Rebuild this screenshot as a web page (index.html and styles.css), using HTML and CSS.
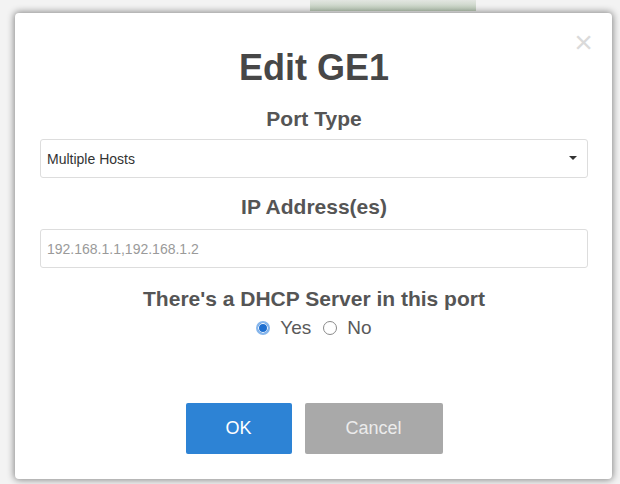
FILE: index.html
```html
<!DOCTYPE html>
<html>
<head>
    <meta charset="UTF-8">
    <title>Edit GE1</title>
    <link rel="stylesheet" href="styles.css">
</head>
<body>
    <div class="bg-tab"></div>
    <div class="modal">
        <span class="close">&times;</span>
        <h1 class="title">Edit GE1</h1>

        <label class="label" for="portType">Port Type</label>
        <div class="select-wrap">
            <select id="portType" class="field">
                <option>Multiple Hosts</option>
            </select>
            <span class="caret"></span>
        </div>

        <label class="label" for="ipAddr">IP Address(es)</label>
        <input id="ipAddr" class="field" type="text" placeholder="192.168.1.1,192.168.1.2">

        <div class="label dhcp">There's a DHCP Server in this port</div>
        <div class="radios">
            <span class="radio checked"></span><span class="radio-text">Yes</span>
            <span class="radio"></span><span class="radio-text">No</span>
        </div>

        <div class="btns">
            <div class="btn btn-ok">OK</div>
            <div class="btn btn-cancel">Cancel</div>
        </div>
    </div>
</body>
</html>
```

FILE: styles.css
```css
*{
    margin: 0;
    padding: 0;
    box-sizing: border-box;
}
body{
    position: relative;
    background: #f3f3f3;
    font-family: "Liberation Sans", Arial, sans-serif;
    padding: 13px 8px 5px 15px;
    height: 484px;
    overflow: hidden;
}
.bg-tab{
    position: absolute;
    top: 0;
    left: 310px;
    width: 166px;
    height: 11px;
    background: linear-gradient(#e2e6e1, #bccbb8);
}
.modal{
    position: relative;
    width: 597px;
    height: 466px;
    background: #fff;
    border-radius: 4px;
    box-shadow: 0 0 7px 1px rgba(0,0,0,.45);
    padding: 35px 24px 0 25px;
    display: flex;
    flex-direction: column;
    align-items: stretch;
    text-align: center;
}
.close{
    position: absolute;
    top: 16px;
    right: 19px;
    font-size: 32px;
    line-height: 26px;
    font-weight: 300;
    color: #dadada;
}
.title{
    font-size: 36px;
    line-height: 40px;
    font-weight: bold;
    color: #474747;
}
.label{
    display: block;
    font-size: 21px;
    line-height: 25px;
    font-weight: bold;
    color: #555;
    margin: 18px 0 8px;
}
.select-wrap{
    position: relative;
}
.field{
    display: block;
    width: 100%;
    height: 39px;
    border: 1px solid #ddd;
    border-radius: 3px;
    background: #fff;
    padding: 0 6px;
    font: 14px "Liberation Sans", Arial, sans-serif;
    color: #333;
    appearance: none;
    -webkit-appearance: none;
    outline: none;
}
.field::placeholder{
    color: #9a9a9a;
}
.caret{
    position: absolute;
    right: 11px;
    top: 17px;
    border-left: 4px solid transparent;
    border-right: 4px solid transparent;
    border-top: 4px solid #333;
}
.select-wrap + .label{
    margin-top: 16px;
    margin-bottom: 10px;
}
.dhcp{
    margin: 18px 0 5px;
}
.radios{
    display: flex;
    justify-content: center;
    align-items: center;
    height: 24px;
    font-size: 19px;
    color: #5a5a5a;
}
.radio{
    width: 14px;
    height: 14px;
    border-radius: 50%;
    border: 1px solid #8a8a8a;
    margin-right: 10px;
}
.radio.checked{
    border: 2px solid #86b6ec;
    background: #1e6fd0;
    box-shadow: inset 0 0 0 1px #fff;
}
.radio-text{
    margin-right: 12px;
}
.radio-text:last-child{
    margin-right: 0;
}
.btns{
    display: flex;
    justify-content: center;
    gap: 13px;
    margin-top: 63px;
}
.btn{
    height: 51px;
    border-radius: 2px;
    font-size: 18px;
    line-height: 51px;
    color: #fff;
}
.btn-ok{
    width: 106px;
    background: #2d83d5;
}
.btn-cancel{
    width: 138px;
    background: #a9a9a9;
    color: #ececec;
}
```
